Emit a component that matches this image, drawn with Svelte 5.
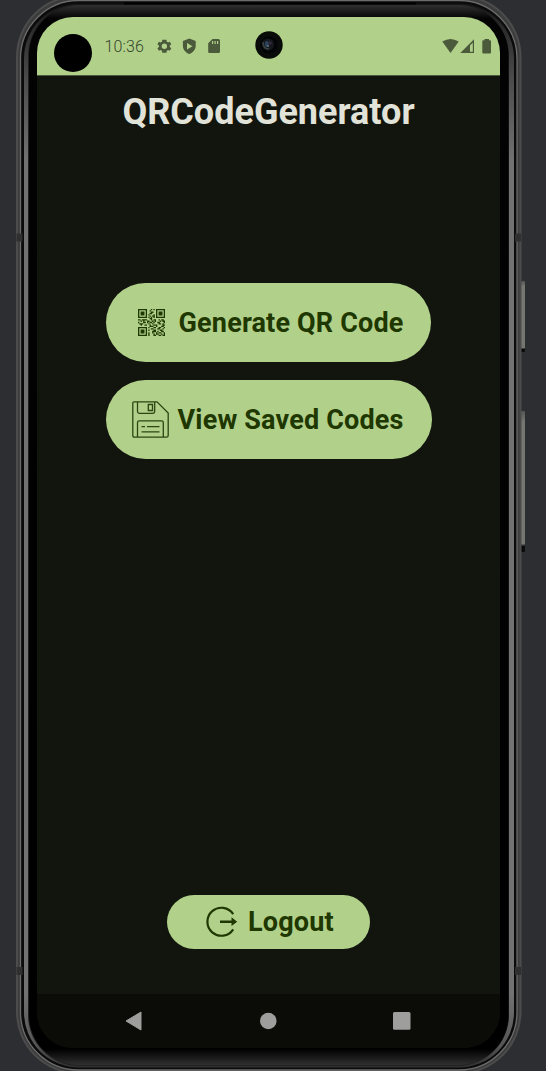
<script>
  const qr = [
    '111111100010101111111',
    '100000100100001000001',
    '101110100011001011101',
    '101110100110001011101',
    '101110101000101011101',
    '100000100101101000001',
    '111111101010101111111',
    '000000000110000000000',
    '110111100010110010110',
    '001010011001010001011',
    '100011010110100110001',
    '011100001001000011010',
    '001001100100111000011',
    '000000000111001000110',
    '111111101000110011001',
    '100000100011000110010',
    '101110101000110001100',
    '101110100001110100110',
    '101110101001001011001',
    '100000101000101100101',
    '111111101000110011011'
  ];
  const path = qr
    .map((row, y) => [...row].map((c, x) => (c === '1' ? `M${x} ${y}h1.04v1.04h-1.04z` : '')).join(''))
    .join('');
</script>

<div class="stage">
  <svg class="frame" width="546" height="1071" viewBox="0 0 546 1071" aria-hidden="true">
    <defs>
      <linearGradient id="key" x1="0" x2="0" y1="0" y2="1">
        <stop offset="0" stop-color="#555" /><stop offset=".08" stop-color="#777772" />
        <stop offset=".94" stop-color="#777772" /><stop offset=".96" stop-color="#0b0b0b" />
      </linearGradient>
      <linearGradient id="rim" x1="0" x2="0" y1="0" y2="1">
        <stop offset="0" stop-color="#151515" /><stop offset=".025" stop-color="#2c2c2c" />
        <stop offset=".07" stop-color="#4b4b4b" /><stop offset=".15" stop-color="#727272" />
        <stop offset=".93" stop-color="#727272" /><stop offset=".98" stop-color="#555" />
        <stop offset="1" stop-color="#303030" />
      </linearGradient>
      <linearGradient id="lip" x1="0" x2="0" y1="0" y2="1">
        <stop offset="0" stop-color="#303030" /><stop offset=".013" stop-color="#030303" />
        <stop offset=".985" stop-color="#000" /><stop offset="1" stop-color="#303030" />
      </linearGradient>
    </defs>
    <rect x="521" y="281" width="4" height="71" rx="1" fill="url(#key)" />
    <rect x="521" y="411" width="4" height="141" rx="1" fill="url(#key)" />
    <rect x="16" y="-5" width="505.500" height="1079" rx="62" fill="#4c4c4c" />
    <rect x="18" y="-3" width="501.500" height="1075" rx="60" fill="#3c3c3c" />
    <rect x="20.500" y="0.500" width="496.500" height="1069.500" rx="58" fill="#0b0b0b" stroke="#6c6c6c" stroke-width="1.300" />
    <path d="M16.500 235h6M515 235h6M16.500 968.500h6M515 968.500h6" transform="translate(0 2.500)" stroke="#303030" stroke-width="8" />
    <rect x="24" y="3.500" width="490" height="1064" rx="55" fill="url(#rim)" />
    <rect x="28" y="5" width="481" height="1061" rx="51" fill="#202020" />
    <rect x="29" y="5" width="479.500" height="1060" rx="50" fill="url(#lip)" />
    <path d="M124 3.500H416" stroke="#000" stroke-width="2" />
  </svg>

  <main class="screen">
    <header class="status">
      <span class="disc"></span>
      <span class="time">10:36</span>
      <svg class="left-icons" width="66" height="18" viewBox="156 38 66 18" fill="#4a5a3a">
        <g transform="translate(155.600 37.500) scale(.73)">
          <path d="M19.400 13c.1-.7.100-1.300 0-2l2.100-1.600-2-3.500-2.500 1a7 7 0 0 0-1.700-1L14.900 3h-5.800l-.4 2.900a7 7 0 0 0-1.700 1l-2.500-1-2 3.500L4.600 11c-.1.700-.1 1.300 0 2l-2.100 1.600 2 3.500 2.500-1a7 7 0 0 0 1.700 1l.4 2.900h5.800l.4-2.900a7 7 0 0 0 1.700-1l2.500 1 2-3.500zM12 15.700a3.700 3.700 0 1 1 0-7.400 3.700 3.700 0 0 1 0 7.400z" />
        </g>
        <path fill-rule="evenodd" d="M189.300 38.500L195.700 41V46C195.700 49.500 193 52.700 189.300 54C185.600 52.700 182.900 49.500 182.900 46V41ZM187 43V49.500L192.500 46.200Z" />
        <path fill-rule="evenodd" d="M212.500 39H218.500Q220 39 220 40.500V51.800Q220 53 218.500 53H209.500Q208.200 53 208.200 51.800V43.300ZM212 41V44H213.200V41ZM214.500 41V44H215.700V41ZM217 41V44H218.200V41Z" />
      </svg>
      <svg class="camera" width="28" height="28" viewBox="0 0 28 28">
        <circle cx="14" cy="14" r="13.700" fill="#080b08" />
        <circle cx="14" cy="14" r="9.500" fill="#030405" stroke="#0d0f10" />
        <circle cx="13" cy="13.500" r="6" fill="#15191d" />
        <path d="M8 11Q8 18 14 18" fill="none" stroke="#3c4443" stroke-width="1.500" />
        <ellipse cx="11.800" cy="13" rx="2" ry="3" fill="#29445b" />
        <circle cx="15" cy="12" r="1.800" fill="#34283f" />
        <circle cx="13" cy="15" r="1" fill="#65727c" />
      </svg>
      <svg class="right-icons" width="50" height="18" viewBox="442 38 50 18" fill="#4a5a3a">
        <path d="M442.300 41.500Q450.500 36.500 458.700 41.500L450.500 53Z" />
        <path fill-rule="evenodd" d="M460.300 53L474 39.300V53ZM470 45.500V51.800H472.800V42.700Z" />
        <path d="M484.500 39H489V40.300H490Q491 40.300 491 41.300V52.500Q491 53.500 490 53.500H483.300Q482.300 53.500 482.300 52.500V41.300Q482.300 40.300 483.300 40.300H484.500Z" />
      </svg>
    </header>

    <h1>QRCodeGenerator</h1>

    <section class="actions">
      <button class="generate">
        <svg width="27" height="27" viewBox="0 0 21 21"><path d={path} fill="#1f3701" /></svg>
        <span>Generate QR Code</span>
      </button>
      <button class="saved">
        <svg width="37" height="37" viewBox="0 0 37 37" fill="none" stroke="#2c4511" stroke-width="1.300">
          <path d="M2 .8H25L36.200 12V34.500Q36.200 36.200 34.500 36.200H2.500Q.8 36.200.8 34.500V2Q.8.800 2 .8Z" />
          <path d="M5.500 1V10.500Q5.500 12.300 7.300 12.300H21Q22.700 12.300 22.700 10.500V1M16.300 3.500H20.500V9.500H16.300ZM5.500 36V21.500Q5.500 19.800 7.200 19.800H29.500Q31.300 19.800 31.300 21.500V36M9.500 25.700H13M15 25.700H27.500M9.500 30.800H27.500" />
        </svg>
        <span>View Saved Codes</span>
      </button>
    </section>

    <button class="logout">
      <svg width="32" height="32" viewBox="0 0 32 32">
        <path d="M27.200 8.200A14 14 0 1 0 27.200 23.300" fill="none" stroke="#1f3701" stroke-width="2.200" />
        <path d="M14 14.400H25.500V11.300L31.200 15.700L25.500 20.100V17H14Z" fill="#1f3701" />
      </svg>
      <span>Logout</span>
    </button>

    <nav>
      <svg width="463" height="54" viewBox="37 994 463 54" fill="#9e9e9c">
        <path d="M126 1021L141 1012V1030Z" stroke="#9e9e9c" stroke-linejoin="round" />
        <circle cx="268.300" cy="1021" r="8.300" />
        <rect x="393" y="1012" width="17.500" height="17.800" rx="1.500" />
      </svg>
    </nav>
  </main>
</div>

<style>
  :global(body) { background: #2d2e32; }
  .stage {
    display: grid;
    width: 546px;
    height: 1071px;
    overflow: hidden;
    background: #2d2e32;
    font-family: Roboto, sans-serif;
  }
  .frame, .screen { grid-area: 1 / 1; }
  .screen {
    box-sizing: border-box;
    display: flex;
    flex-direction: column;
    align-items: center;
    width: 463px;
    height: 1031px;
    margin: 17px 0 0 37px;
    border-radius: 36px;
    overflow: hidden;
    background: #12150e;
    z-index: 1;
  }
  .status {
    display: flex;
    box-sizing: border-box;
    width: 100%;
    height: 59px;
    flex: none;
    padding-left: 17px;
    background: #b1d18a;
    border-bottom: 1px solid #4a5a39;
  }
  .status svg, .status span { flex: none; }
  .disc { width: 38px; height: 38px; margin-top: 17px; border-radius: 50%; background: #000; }
  .time { width: 40px; margin: 20px 0 0 12.500px; font-size: 16px; line-height: 19px; font-weight: 300; letter-spacing: .1px; color: #35452a; white-space: nowrap; }
  .left-icons { margin: 21px 0 0 11.500px; }
  .camera { margin: 14px 0 0 33px; }
  .right-icons { margin: 21px 0 0 159px; }
  h1 {
    margin: 15px 0 0;
    font-size: 36px;
    line-height: 43px;
    font-weight: 700;
    color: #e2e3d8;
    white-space: nowrap;
  }
  button {
    display: flex;
    box-sizing: border-box;
    align-items: center;
    border: 0;
    background: #b1d18a;
    color: #1f3701;
    font-family: inherit;
    font-size: 27px;
    line-height: 32px;
    font-weight: 700;
    letter-spacing: .17px;
    white-space: nowrap;
  }
  button svg { flex: none; }
  .actions { display: flex; flex-direction: column; align-items: center; gap: 18px; margin-top: 149px; }
  .generate { width: 325px; height: 79px; padding: 0 0 0 32px; gap: 13.500px; border-radius: 40px; }
  .saved { width: 326px; height: 79px; padding: 0 0 0 26px; gap: 9px; border-radius: 40px; }
  .logout { width: 203px; height: 54px; margin: auto 0 45px; padding: 0 0 0 39px; gap: 10px; border-radius: 27px; }
  nav { width: 463px; height: 54px; flex: none; background: #0b0c08; }
  nav svg { display: block; }
</style>
